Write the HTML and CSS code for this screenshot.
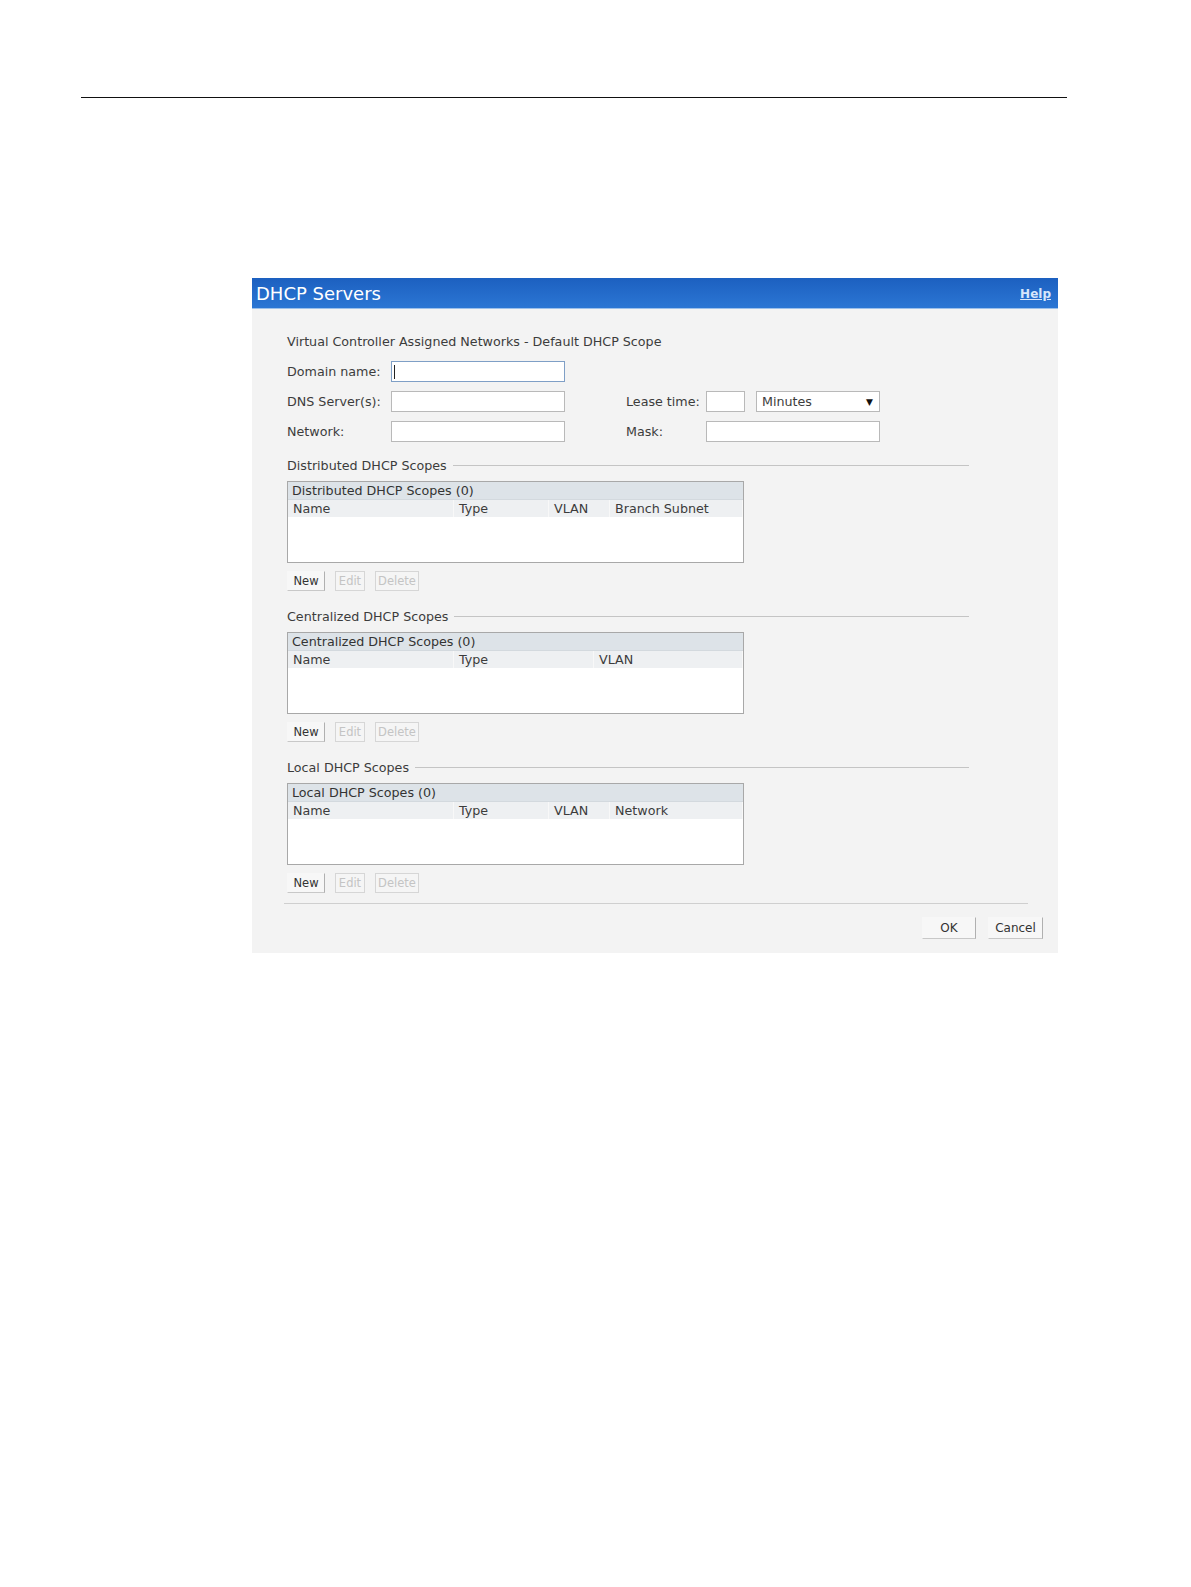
FILE: index.html
```html
<!DOCTYPE html>
<html lang="en">
<head>
  <meta charset="UTF-8">
  <meta name="viewport" content="width=device-width, initial-scale=1.0">
  <title>DHCP Servers</title>
  <link rel="stylesheet" href="styles.css">
</head>
<body>
  <div class="page-rule"></div>

  <div class="dialog">
    <div class="dialog-header">
      <span class="dialog-title">DHCP Servers</span>
      <a class="help-link" href="#">Help</a>
    </div>

    <div class="dialog-body">
      <div class="intro">Virtual Controller Assigned Networks - Default DHCP Scope</div>

      <div class="form-grid">
        <label class="field-label">Domain name:</label>
        <div class="text-input focused"><span class="caret"></span></div>

        <label class="field-label">DNS Server(s):</label>
        <div class="text-input"></div>
        <label class="field-label right">Lease time:</label>
        <div class="lease-group">
          <div class="text-input lease-input"></div>
          <div class="select-box"><span>Minutes</span><span class="arrow">&#9660;</span></div>
        </div>

        <label class="field-label">Network:</label>
        <div class="text-input"></div>
        <label class="field-label right">Mask:</label>
        <div class="text-input"></div>
      </div>

      <!-- Distributed scopes -->
      <section class="scope">
        <div class="legend"><span>Distributed DHCP Scopes</span><span class="legend-line"></span></div>
        <div class="scope-table">
          <div class="table-title">Distributed DHCP Scopes (0)</div>
          <div class="table-head cols-four">
            <span>Name</span><span>Type</span><span>VLAN</span><span>Branch Subnet</span>
          </div>
          <div class="table-rows"></div>
        </div>
        <div class="actions">
          <button class="btn">New</button>
          <button class="btn btn-edit" disabled>Edit</button>
          <button class="btn btn-delete" disabled>Delete</button>
        </div>
      </section>

      <!-- Centralized scopes -->
      <section class="scope">
        <div class="legend"><span>Centralized DHCP Scopes</span><span class="legend-line"></span></div>
        <div class="scope-table">
          <div class="table-title">Centralized DHCP Scopes (0)</div>
          <div class="table-head cols-three">
            <span>Name</span><span>Type</span><span>VLAN</span>
          </div>
          <div class="table-rows"></div>
        </div>
        <div class="actions">
          <button class="btn">New</button>
          <button class="btn btn-edit" disabled>Edit</button>
          <button class="btn btn-delete" disabled>Delete</button>
        </div>
      </section>

      <!-- Local scopes -->
      <section class="scope">
        <div class="legend"><span>Local DHCP Scopes</span><span class="legend-line"></span></div>
        <div class="scope-table">
          <div class="table-title">Local DHCP Scopes (0)</div>
          <div class="table-head cols-four">
            <span>Name</span><span>Type</span><span>VLAN</span><span>Network</span>
          </div>
          <div class="table-rows"></div>
        </div>
        <div class="actions">
          <button class="btn">New</button>
          <button class="btn btn-edit" disabled>Edit</button>
          <button class="btn btn-delete" disabled>Delete</button>
        </div>
      </section>

      <div class="dialog-footer">
        <button class="btn btn-ok">OK</button>
        <button class="btn btn-cancel">Cancel</button>
      </div>
    </div>
  </div>
</body>
</html>
```

FILE: styles.css
```css
body {
  margin: 0;
  background: #fff;
  font-family: "DejaVu Sans", Verdana, sans-serif;
  font-size: 12.7px;
  color: #3c3c3c;
}
.page-rule {
  margin: 97px 0 0 81px;
  width: 986px;
  border-top: 1px solid #111;
}
.dialog {
  margin: 180px 0 0 252px;
  width: 806px;
  background: #f3f3f3;
}
.dialog-header {
  height: 30px;
  display: flex;
  align-items: center;
  justify-content: space-between;
  padding: 0 7px 0 4px;
  background: linear-gradient(#1c60c0, #2b76d4);
  border-bottom: 1px solid #9cc0ea;
}
.dialog-title {
  color: #fff;
  font-size: 18px;
}
.help-link {
  color: #d6e6fb;
  font-size: 12px;
  font-weight: bold;
  text-decoration: underline;
  margin-top: 2px;
}
.dialog-body {
  padding: 25px 0 14px 35px;
}
.intro {
  line-height: 16px;
}
.form-grid {
  display: grid;
  grid-template-columns: 104px 174px 61px 80px 174px;
  grid-auto-rows: 21px;
  row-gap: 9px;
  margin-top: 11px;
  align-items: center;
}
.field-label {
  grid-column: 1;
}
.field-label.right {
  grid-column: 4;
}
.text-input {
  height: 21px;
  box-sizing: border-box;
  border: 1px solid #b9b9b9;
  background: #fff;
  position: relative;
}
.text-input.focused {
  border-color: #7f9fc6;
}
.caret {
  position: absolute;
  left: 2px;
  top: 3px;
  width: 1px;
  height: 14px;
  background: #222;
}
.lease-group {
  display: flex;
  gap: 11px;
}
.lease-input {
  width: 39px;
}
.select-box {
  width: 124px;
  height: 21px;
  box-sizing: border-box;
  border: 1px solid #b9b9b9;
  background: #fff;
  display: flex;
  align-items: center;
  justify-content: space-between;
  padding: 0 6px 0 5px;
}
.select-box .arrow {
  font-size: 9px;
  color: #111;
}
.scope {
  width: 682px;
  margin-top: 15px;
}
.scope + .scope {
  margin-top: 17px;
}
.legend {
  display: flex;
  align-items: center;
  height: 16px;
}
.legend-line {
  flex: 1;
  margin-left: 6px;
  border-top: 1px solid #c4c4c4;
}
.scope-table {
  margin-top: 8px;
  width: 457px;
  box-sizing: border-box;
  border: 1px solid #a8a8a8;
  background: #fff;
}
.table-title {
  height: 17px;
  line-height: 17px;
  padding-left: 4px;
  color: #333;
  background: #dde3e8;
  border-bottom: 1px solid #d3d9de;
}
.table-head {
  display: grid;
  height: 17px;
  line-height: 17px;
  background: #eef0f2;
}
.table-head span {
  padding-left: 5px;
  border-right: 1px solid #f8f8f8;
}
.cols-four {
  grid-template-columns: 166px 95px 61px 1fr;
}
.cols-three {
  grid-template-columns: 166px 140px 1fr;
}
.table-rows {
  height: 45px;
}
.actions {
  display: flex;
  gap: 10px;
  margin-top: 8px;
}
.btn {
  height: 20px;
  padding: 0;
  font-family: "DejaVu Sans", Tahoma, sans-serif;
  font-size: 11.5px;
  color: #333;
  background: #f7f7f7;
  border: 1px solid #f7f7f7;
  border-right-color: #b0b0b0;
  border-bottom-color: #c8c8c8;
}
.actions .btn {
  width: 38px;
}
.actions .btn-edit {
  width: 30px;
}
.actions .btn-delete {
  width: 44px;
}
.btn:disabled {
  color: #c4c4c4;
  background: #f5f5f5;
  border: 1px solid #d6d6d6;
}
.dialog-footer {
  margin: 10px 30px 0 -3px;
  border-top: 1px solid #cfcfcf;
  padding-top: 13px;
  display: flex;
  justify-content: flex-end;
  gap: 12px;
}
.btn-ok,
.btn-cancel {
  height: 22px;
  font-size: 12px;
}
.btn-ok {
  width: 54px;
}
.btn-cancel {
  width: 55px;
  margin-right: -15px;
}
```
